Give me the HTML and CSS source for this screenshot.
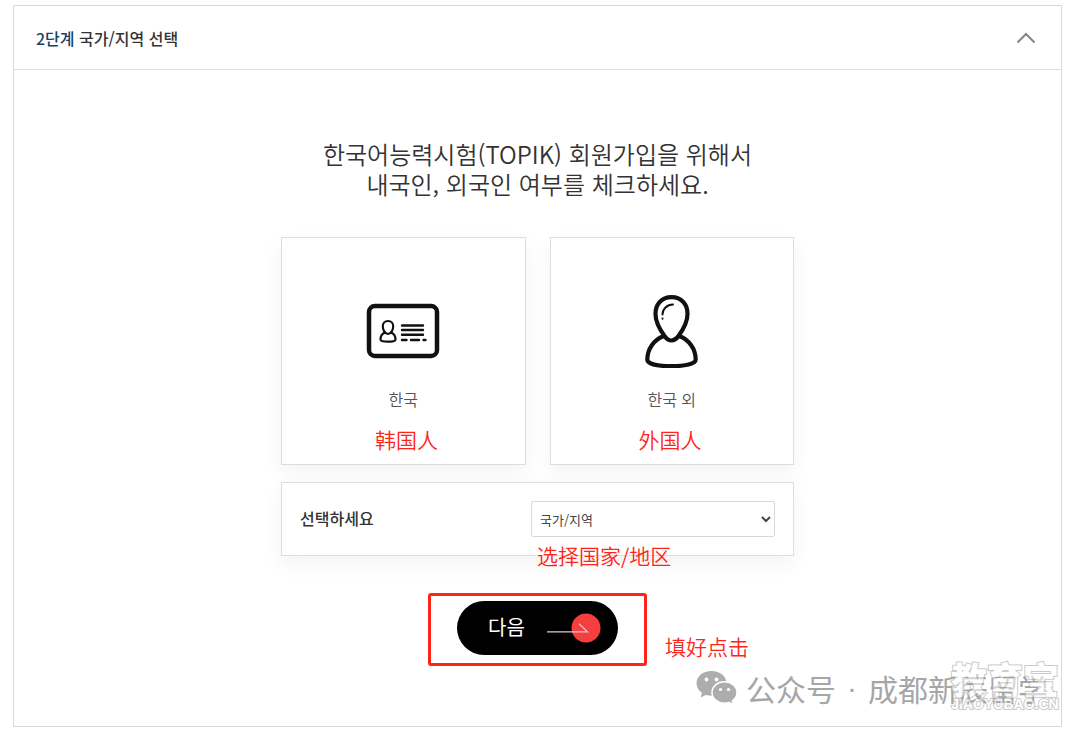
FILE: index.html
```html
<!DOCTYPE html>
<html lang="ko">
<head>
<meta charset="utf-8">
<meta name="viewport" content="width=device-width, initial-scale=1">
<title>2단계 국가/지역 선택</title>
<link rel="stylesheet" href="styles.css">
</head>
<body>
<main class="panel">
  <header class="panel-head">
    <h1 class="panel-title"><span class="step">2단계</span> 국가/지역 선택</h1>
    <button class="toggle" type="button" aria-label="접기">
      <svg width="20" height="12" viewBox="0 0 20 12" fill="none" stroke="#858585" stroke-width="2"><path d="M1.5 10.5 10 2l8.500 8.500"/></svg>
    </button>
  </header>
  <section class="panel-body">
    <h2 class="lead">한국어능력시험(TOPIK) 회원가입을 위해서<br>내국인, 외국인 여부를 체크하세요.</h2>
    <div class="form">
      <div class="cards">
        <button class="card" type="button">
          <svg class="card-icon" width="76" height="76" viewBox="0 0 76 76" fill="none" stroke="#111" stroke-linecap="round" stroke-linejoin="round">
            <rect x="4" y="14" width="68" height="50" rx="6" stroke-width="4.500"/>
            <path stroke-width="2.200" d="M23 29c-3.500 0-5.200 2.600-5.200 5.300 0 3.200 2 7.700 5.200 7.700s5.200-4.500 5.200-7.700c0-2.700-1.700-5.300-5.200-5.300ZM20 40.500c-2.800 1-4.500 4-4.500 7 0 1.500 3 2.200 7.500 2.200s7.500-.7 7.500-2.200c0-3-1.700-6-4.500-7"/>
            <path stroke-width="2.400" d="M37 33.500h21M37 38h21M37 42.700h21M37 48h4.500M46 48h8M58.500 48h2"/>
          </svg>
          <span class="card-label">한국</span>
          <span class="note note-korean" lang="zh">韩国人</span>
        </button>
        <button class="card" type="button">
          <svg class="card-icon" width="76" height="76" viewBox="0 0 76 76" fill="none" stroke="#111" stroke-linecap="round" stroke-linejoin="round">
            <path stroke-width="4.200" d="M37.500 5.200C27 5.200 21.500 13 21.500 22c0 9 5 16.500 9 22 2.500 3.600 4.500 4.500 7 4.500s4.500-.9 7-4.500c4-5.500 9-13 9-22 0-9-5.500-16.800-16-16.800Z"/>
            <path stroke-width="4.200" d="M29.500 44.200c-9.500 3.300-16.200 13-16.200 23.300 0 4.500 11 6.700 24.200 6.700s24.200-2.200 24.200-6.700C61.700 57.200 55 47.500 45.500 44.200"/>
            <path stroke-width="2" d="M39 12.500c-6 0-10.500 4.500-10.500 10M28.500 26.500v.2"/>
          </svg>
          <span class="card-label">한국 외</span>
          <span class="note note-foreign" lang="zh">外国人</span>
        </button>
      </div>
      <div class="field">
        <label class="field-label" for="country">선택하세요</label>
        <select class="field-select" id="country"><option>국가/지역</option></select>
        <span class="note note-country" lang="zh">选择国家/地区</span>
      </div>
    </div>
    <div class="action">
      <button class="next" type="button">
        <span class="next-text">다음</span>
        <svg width="56" height="30" viewBox="0 0 56 30" fill="none"><circle cx="40" cy="15" r="14.500" fill="#f63e3f"/><path d="M1 18.800h40.500l-8.500-8" stroke="#e4c8c8" stroke-width="1.200"/></svg>
      </button>
      <span class="note note-click" lang="zh">填好点击</span>
    </div>
  </section>
  <div class="credit" lang="zh">
    <svg width="42" height="34" viewBox="0 0 42 34"><path fill="#adadad" d="M15.500 0C7 0 .5 5.500.5 12.300c0 4 2.200 7.300 5.500 9.500L4.600 26.500l5.300-2.600c1.800.5 3.600.8 5.600.8C24 24.700 30.500 19.200 30.500 12.300S24 0 15.500 0Z"/><path fill="#adadad" stroke="#fff" stroke-width="1.500" d="M28.500 10.800c-7 0-12.500 4.800-12.500 10.700S21.500 32.200 28.500 32.200c1.700 0 3.200-.3 4.600-.7l4.300 2-1-3.700c2.800-2 4.600-4.900 4.600-8.300 0-5.900-5.500-10.700-12.500-10.700Z"/><g fill="#fff"><circle cx="10.500" cy="8.500" r="1.900"/><circle cx="20.500" cy="8.500" r="1.900"/><circle cx="24.500" cy="18.500" r="1.600"/><circle cx="32.500" cy="18.500" r="1.600"/></g></svg>
    <span>公众号</span><span class="dot">·</span><span>成都新辰留学</span>
  </div>
  <div class="mark" lang="zh">
    <span class="mark-name">教育宝</span>
    <span class="mark-site">JIAOYUBAO.CN</span>
  </div>
</main>
</body>
</html>
```
FILE: styles.css
```css
* { box-sizing: border-box; }
body {
  margin: 0;
  padding: 5px 18px 6px 13px;
  background: #fff;
  color: #333;
  font-family: "Noto Sans CJK KR", sans-serif;
}
button { margin: 0; padding: 0; border: 0; background: none; font: inherit; color: inherit; cursor: pointer; }
svg { display: block; }
.panel { position: relative; border: 1px solid #d9d9d9; }
.panel-head {
  display: flex;
  align-items: center;
  justify-content: space-between;
  height: 64px;
  padding: 0 25px 0 22px;
  border-bottom: 1px solid #ddd;
}
.panel-title { margin: 0; font-size: 16px; font-weight: 500; line-height: 24px; }
.step { color: #164269; }
.panel-body { padding: 69px 20px 60px; }
.lead {
  margin: 0 0 38px;
  color: #333;
  font-size: 24px;
  font-weight: 350;
  line-height: 30px;
  text-align: center;
}
.form { max-width: 513px; margin: 0 auto; }
.cards { display: grid; grid-template-columns: 1fr 1fr; gap: 24px; margin-bottom: 17px; }
.card, .field {
  position: relative;
  border: 1px solid #ddd;
  background: #fff;
  box-shadow: 0 8px 20px rgba(0, 0, 0, .05);
}
.card { display: flex; flex-direction: column; align-items: center; height: 228px; padding-top: 54px; }
.card-label { margin-top: 19px; color: #555; font-size: 16px; font-weight: 350; line-height: 24px; }
.field {
  display: flex;
  align-items: center;
  justify-content: space-between;
  height: 74px;
  padding: 0 18px;
}
.field-label { padding-bottom: 2px; font-size: 16px; font-weight: 500; }
.field-select {
  width: 244px;
  height: 36px;
  padding: 0 5px 0 4px;
  border: 1px solid #d9d9d9;
  border-radius: 2px;
  background: #fff;
  color: #444;
  font-family: inherit;
  font-size: 13px;
}
.note {
  position: absolute;
  color: #ff2419;
  font-family: "Noto Sans CJK SC", sans-serif;
  font-size: 21px;
  font-weight: 350;
  line-height: 28px;
  white-space: nowrap;
}
.note-korean { left: 93px; bottom: 11px; }
.note-foreign { left: 88px; bottom: 11px; }
.note-country { left: 255px; top: 58px; }
.note-click { left: 234px; top: 36px; }
.action {
  position: relative;
  width: 219px;
  margin: 37px auto 0;
  padding: 5px 26px 8px;
  border: 3px solid #ff2419;
  border-radius: 3px;
}
.next {
  display: flex;
  align-items: center;
  justify-content: space-between;
  width: 100%;
  height: 54px;
  padding: 0 16px 0 31px;
  border-radius: 27px;
  background: #000;
  color: #fff;
  font-size: 20px;
}
.next-text { padding-bottom: 3px; }
.credit {
  position: absolute;
  right: 13px;
  bottom: 20px;
  display: flex;
  align-items: center;
  color: #a6a6a6;
  font-family: "Noto Sans CJK SC", sans-serif;
  font-size: 30px;
  font-weight: 400;
  line-height: 36px;
  white-space: nowrap;
}
.credit svg { margin-right: 8px; }
.dot { width: 32px; font-family: "Liberation Sans", sans-serif; text-align: center; }
.mark {
  position: absolute;
  right: 2px;
  bottom: 14px;
  display: flex;
  flex-direction: column;
  align-items: center;
  color: #fff;
  font-weight: 900;
  white-space: nowrap;
  opacity: .55;
  paint-order: stroke fill;
  -webkit-text-stroke: 2px #a0a0a0;
}
.mark-name { font-family: "Noto Sans CJK SC", sans-serif; font-size: 36px; line-height: 36px; }
.mark-site { font-family: "Liberation Sans", sans-serif; font-size: 14px; line-height: 16px; }
```
